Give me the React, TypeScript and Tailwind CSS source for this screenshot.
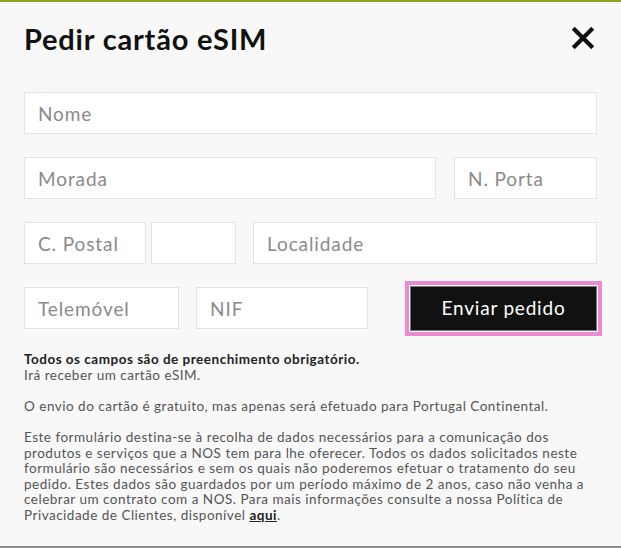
import React from 'react';

function Field({ placeholder, className }: { placeholder: string; className: string }) {
  return (
    <input
      type="text"
      placeholder={placeholder}
      className={`h-[42px] bg-white border border-[#e3e3e3] px-[13px] text-[19px] tracking-[0.9px] text-[#333] placeholder:text-[#8a8a8a] outline-none ${className}`}
    />
  );
}

export default function App() {
  return (
    <div
      className="w-[621px] h-[548px] bg-[#f8f8f8] border-t-2 border-t-[#8aa51c] border-b-2 border-b-[#8c8c8c] overflow-hidden"
      style={{ fontFamily: 'Lato, "Open Sans", sans-serif' }}
    >
      {/* Header */}
      <div className="flex items-start justify-between px-6 pt-[20px]">
        <h2 className="text-[29px] leading-[34px] tracking-[0.8px] font-bold text-[#111]">Pedir cartão eSIM</h2>
        <button className="mt-[5px] mr-[3px] text-[#111]" aria-label="Fechar">
          <svg width="22" height="22" viewBox="0 0 24 24">
            <path d="M3 3 L21 21 M21 3 L3 21" stroke="currentColor" strokeWidth="4.6" strokeLinecap="square" />
          </svg>
        </button>
      </div>

      {/* Form */}
      <div className="flex flex-col gap-[23px] px-6 mt-[36px]">
        <div className="flex">
          <Field placeholder="Nome" className="w-[574px]" />
        </div>
        <div className="flex gap-[18px]">
          <Field placeholder="Morada" className="w-[413px]" />
          <Field placeholder="N. Porta" className="w-[143px]" />
        </div>
        <div className="flex">
          <Field placeholder="C. Postal" className="w-[122px]" />
          <Field placeholder="" className="w-[85px] ml-[5px]" />
          <Field placeholder="Localidade" className="w-[345px] ml-[17px]" />
        </div>
        <div className="flex items-start">
          <Field placeholder="Telemóvel" className="w-[155px]" />
          <Field placeholder="NIF" className="w-[172px] ml-[17px]" />
          <button className="ml-[42px] -mt-[1px] w-[188px] h-[45px] bg-[#111] border border-[#777] text-white text-[19px] tracking-[0.8px] outline outline-4 outline-offset-1 outline-[#eb8ad0]">
            Enviar pedido
          </button>
        </div>
      </div>

      {/* Notes */}
      <div className="px-6 mt-[21px] text-[13.5px] leading-[15.6px] tracking-[0.5px] text-[#555] whitespace-nowrap">
        <p className="font-bold text-[#222]">Todos os campos são de preenchimento obrigatório.</p>
        <p>Irá receber um cartão eSIM.</p>
        <p className="mt-[15.6px]">O envio do cartão é gratuito, mas apenas será efetuado para Portugal Continental.</p>
        <div className="mt-[15.6px]">
          <p>Este formulário destina-se à recolha de dados necessários para a comunicação dos</p>
          <p>produtos e serviços que a NOS tem para lhe oferecer. Todos os dados solicitados neste</p>
          <p>formulário são necessários e sem os quais não poderemos efetuar o tratamento do seu</p>
          <p>pedido. Estes dados são guardados por um período máximo de 2 anos, caso não venha a</p>
          <p>celebrar um contrato com a NOS. Para mais informações consulte a nossa Política de</p>
          <p>
            Privacidade de Clientes, disponível <a href="#" className="font-bold text-[#222] underline">aqui</a>.
          </p>
        </div>
      </div>
    </div>
  );
}
